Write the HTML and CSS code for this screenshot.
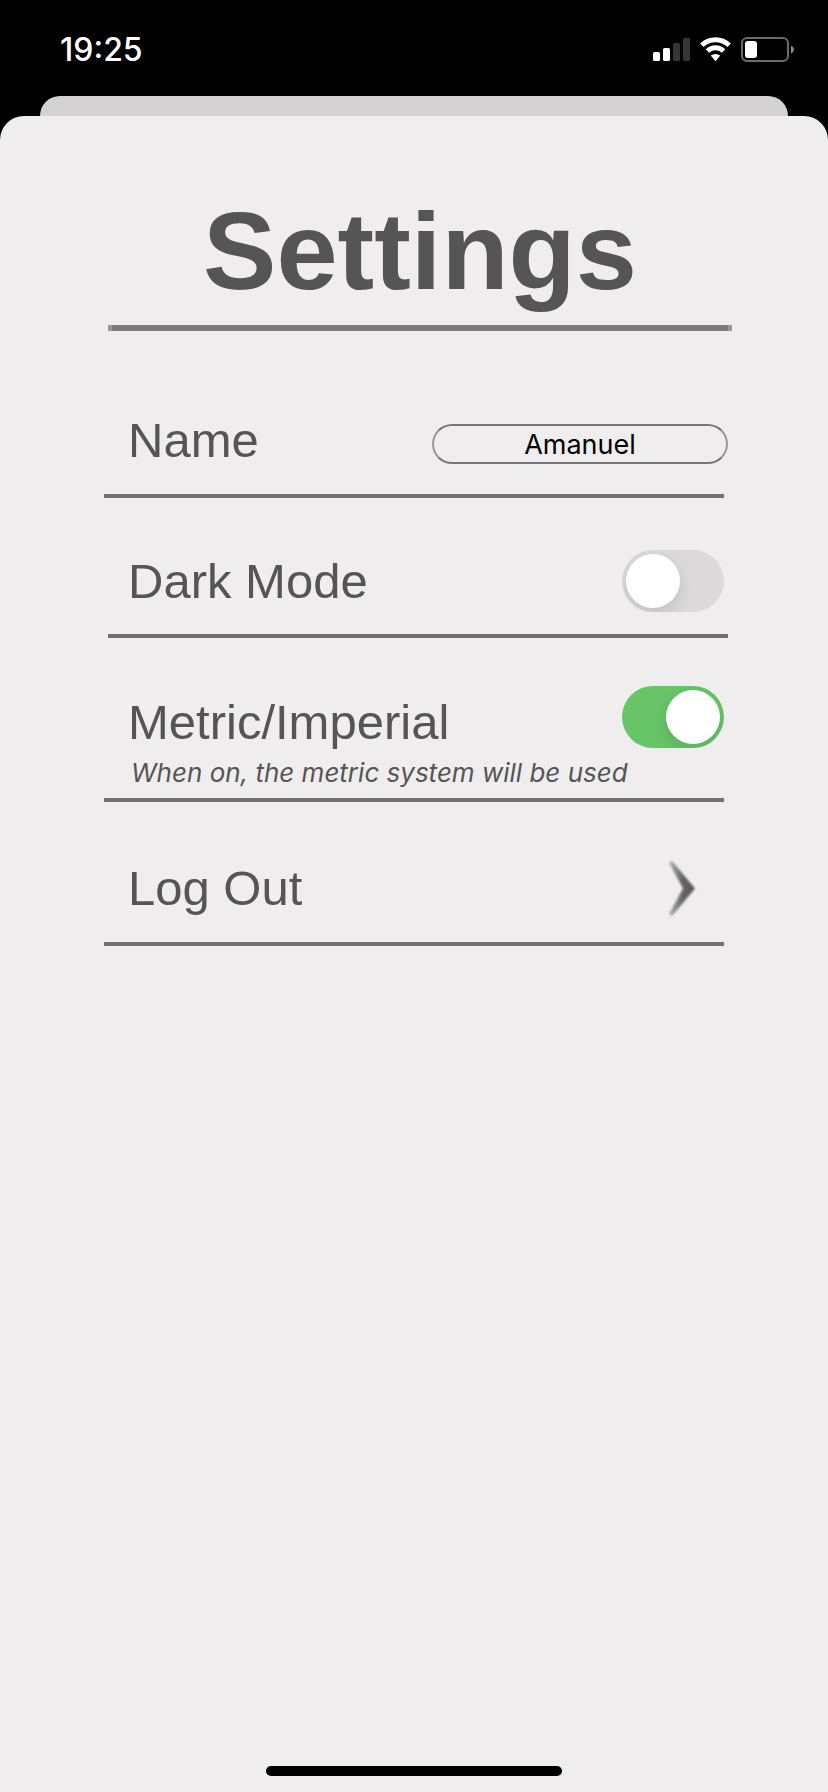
FILE: index.html
```html
<!DOCTYPE html>
<html lang="en">
<head>
<meta charset="utf-8">
<meta name="viewport" content="width=device-width, initial-scale=1">
<title>Settings</title>
<link rel="stylesheet" href="styles.css">
</head>
<body>
<div class="status-bar">
  <time class="clock">19:25</time>
  <svg class="status-icons" width="142" height="28" viewBox="0 0 142 28" aria-hidden="true">
    <g fill="#fff">
      <rect x="0" y="16" width="7" height="9" rx="1.5"/>
      <rect x="10" y="12" width="7" height="13" rx="1.5"/>
    </g>
    <g fill="#363636">
      <rect x="20" y="7" width="7" height="18" rx="1.5"/>
      <rect x="30" y="2" width="7" height="23" rx="1.5"/>
    </g>
    <g fill="none" stroke="#fff" stroke-width="5">
      <path d="M48.8 9.2A20 20 0 0 1 76.2 9.2"/>
      <path d="M54.4 15A12 12 0 0 1 70.6 15"/>
    </g>
    <path d="M57.8 19.6Q62.5 16.2 67.2 19.6L63.2 24.5Q62.5 25.3 61.8 24.5Z" fill="#fff"/>
    <rect x="89" y="2" width="46" height="23" rx="5" fill="none" stroke="#6b6b6b" stroke-width="2"/>
    <rect x="92" y="5" width="12" height="17" rx="3" fill="#fff"/>
    <path d="M138 9.5Q141 11 141 13.5T138 17.5Z" fill="#8a8a8a"/>
  </svg>
</div>
<div class="back-sheet"></div>
<main class="sheet">
  <header class="header">
    <h1 class="title">Settings</h1>
  </header>
  <form class="rows">
    <div class="row row-name">
      <label class="label" for="name">Name</label>
      <input class="name-input" id="name" type="text" value="Amanuel">
    </div>
    <div class="row row-dark">
      <label class="label" for="dark">Dark Mode</label>
      <input class="switch" id="dark" type="checkbox" role="switch">
    </div>
    <div class="row row-metric">
      <div class="text">
        <label class="label" for="metric">Metric/Imperial</label>
        <p class="hint" id="metric-hint">When on, the metric system will be used</p>
      </div>
      <input class="switch" id="metric" type="checkbox" role="switch" aria-describedby="metric-hint" checked>
    </div>
    <button class="row row-logout" type="button">
      <span class="label">Log Out</span>
      <svg class="chevron" width="30" height="60" viewBox="0 0 30 60" aria-hidden="true">
        <defs>
          <linearGradient id="shade" x1="0" x2="1" y1="0" y2="0">
            <stop offset="0" stop-color="#b4b4b4"/>
            <stop offset=".5" stop-color="#666"/>
            <stop offset="1" stop-color="#555"/>
          </linearGradient>
          <filter id="soft"><feGaussianBlur stdDeviation=".8"/></filter>
        </defs>
        <path d="M2 5L5 3L28 30.500L5 58L2 56L16 30.500Z" fill="url(#shade)" filter="url(#soft)"/>
      </svg>
    </button>
  </form>
  <div class="home-bar"></div>
</main>
</body>
</html>
```
FILE: styles.css
```css
* {
  box-sizing: border-box;
}

body {
  margin: 0;
  min-height: 100vh;
  display: flex;
  flex-direction: column;
  background: #000;
  color: #555;
  font-family: "Liberation Sans", Arial, sans-serif;
}

.status-bar {
  display: flex;
  justify-content: space-between;
  align-items: center;
  height: 96px;
  padding: 4px 33px 0 60px;
}

.clock {
  color: #fff;
  font: 500 32px/40px Inter, sans-serif;
}

.status-icons {
  display: block;
}

.back-sheet {
  height: 20px;
  margin: 0 40px;
  border-radius: 20px 20px 0 0;
  background: #d3d1d2;
}

.sheet {
  flex: 1;
  display: flex;
  flex-direction: column;
  padding-top: 73px;
  border-radius: 24px 24px 0 0;
  background: #efedee;
}

.header {
  margin: 0 96px 0 108px;
}

.header::after {
  content: "";
  display: block;
  height: 6px;
  margin-top: 12px;
  border: solid #999;
  border-width: 0 4px;
  background: #7b7b7b;
}

.title {
  margin: 0;
  font-size: 110px;
  line-height: 124px;
  text-align: center;
}

.rows {
  display: flex;
  flex-direction: column;
  margin: 0 104px;
}

.row {
  display: flex;
  justify-content: space-between;
  align-items: center;
  padding: 0 0 0 24px;
  border: 0 solid #717171;
  border-bottom-width: 4px;
  background: none;
  color: inherit;
  font: inherit;
  text-align: left;
}

.row-name {
  padding-top: 81px;
  padding-bottom: 26px;
}

.row-dark {
  margin: 0 -4px 0 4px;
  padding: 52px 4px 22px 20px;
}

.row-metric {
  align-items: flex-start;
  padding-top: 48px;
  padding-bottom: 9px;
}

.row-logout {
  padding-top: 58px;
  padding-right: 27px;
  padding-bottom: 26px;
}

.label {
  display: block;
  font-size: 49px;
  line-height: 56px;
}

.text {
  flex: 1;
  width: 0;
  padding-top: 8px;
}

.hint {
  margin: 7px 0 0 3px;
  font: italic 26px/32px Inter, sans-serif;
  white-space: nowrap;
}

.name-input {
  width: 296px;
  height: 40px;
  margin: 8px -4px 0 0;
  padding: 0 20px;
  border: 2px solid #999;
  border-block-color: #777;
  border-radius: 20px;
  background: transparent;
  color: #000;
  font: 27px/36px Inter, sans-serif;
  text-align: center;
}

.switch {
  appearance: none;
  flex: none;
  display: flex;
  width: 102px;
  height: 62px;
  margin: 0;
  padding: 4px;
  overflow: hidden;
  border-radius: 31px;
  background: #dbd9da;
}

.switch::before {
  content: "";
  width: 54px;
  height: 54px;
  border-radius: 50%;
  background: #fff;
  box-shadow: 0 6px 16px rgb(0 0 0 / 12%);
}

.switch:checked {
  justify-content: flex-end;
  background: #67c568;
}

.chevron {
  display: block;
  margin: -2px 0;
}

.home-bar {
  width: 296px;
  height: 10px;
  margin: auto auto 16px;
  border-radius: 5px;
  background: #000;
}
```
